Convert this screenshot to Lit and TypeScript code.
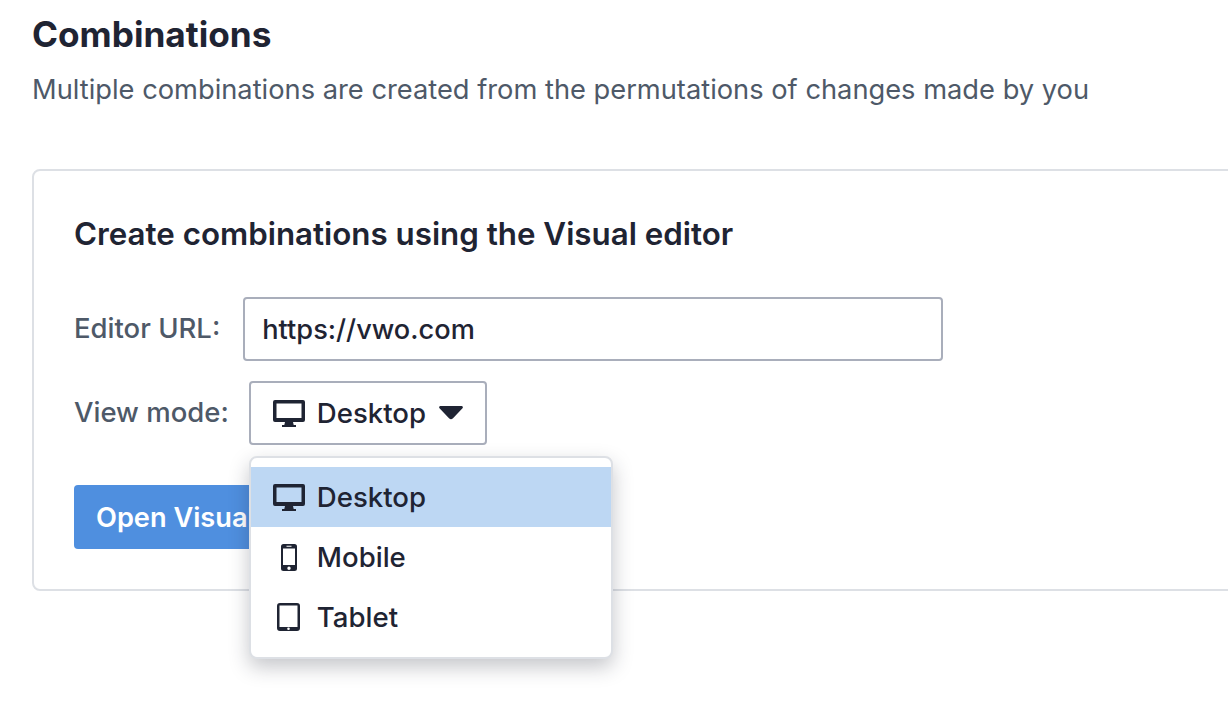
import { LitElement, html, css, svg } from "lit";
import { customElement } from "lit/decorators.js";

const desktop = svg`<path fill-rule="evenodd" d="M2 1h28a2 2 0 0 1 2 2v18a2 2 0 0 1-2 2H20l.7 3H23v2H9v-2h2.3l.7-3H2a2 2 0 0 1-2-2V3a2 2 0 0 1 2-2Zm1.500 3.500v14.500h25V4.500Z"/>`;
const mobile = svg`<path fill-rule="evenodd" d="M2.5 0h11A2.5 2.5 0 0 1 16 2.500v22a2.500 2.500 0 0 1-2.500 2.500h-11A2.500 2.500 0 0 1 0 24.500v-22A2.500 2.500 0 0 1 2.500 0ZM2 4.500v16.500h12V4.500ZM5.500 1.800v1h5v-1ZM8 22.500a1.700 1.700 0 1 0 0 3.400 1.700 1.700 0 0 0 0-3.400Z"/>`;
const tablet = svg`<path fill-rule="evenodd" d="M3 0h17a3 3 0 0 1 3 3v22a3 3 0 0 1-3 3H3a3 3 0 0 1-3-3V3a3 3 0 0 1 3-3Zm-.500 2.500v21.500h18V2.500ZM11.500 24.400a1.300 1.300 0 1 0 0 2.600 1.300 1.300 0 0 0 0-2.600Z"/>`;

@customElement("app-root")
export class AppRoot extends LitElement {
  static styles = css`
    :host {
      display: block;
      width: 1228px;
      height: 720px;
      overflow: hidden;
      background: #fff;
      font-family: Inter, "Noto Sans", sans-serif;
      color: #1f2433;
      box-sizing: border-box;
      padding: 12px 0 0 32px;
    }
    * { box-sizing: border-box; }
    h1 {
      margin: 0;
      font-size: 35.2px;
      line-height: 44px;
      font-weight: 700;
    }
    .sub {
      margin: 16px 0 0;
      font-size: 27.27px;
      line-height: 36px;
      color: #4e5968;
      white-space: nowrap;
    }
    .card {
      margin-top: 61px;
      width: 1300px;
      height: 422px;
      border: 2px solid #dde0e5;
      border-radius: 8px;
      padding: 43px 40px 0;
    }
    h2 {
      margin: 0;
      font-size: 31.3px;
      line-height: 40px;
      font-weight: 600;
    }
    .row { display: flex; align-items: center; }
    .url-row { margin-top: 43px; gap: 23px; }
    .label {
      font-size: 27.5px;
      line-height: 34px;
      font-weight: 500;
      color: #4e5968;
      padding-bottom: 2px;
    }
    .input {
      width: 700px;
      height: 64px;
      border: 2px solid #a9aebb;
      border-radius: 4px;
      padding: 0 17px;
      display: flex;
      align-items: center;
      font-size: 27.2px;
      font-weight: 500;
    }
    .mode-row { margin-top: 20px; gap: 20px; }
    .select {
      width: 238px;
      height: 64px;
      border: 2px solid #a9aebb;
      border-radius: 4px;
      padding-left: 22px;
      display: flex;
      align-items: center;
      font-size: 27.6px;
      font-weight: 500;
      position: relative;
    }
    .ico { width: 32px; display: flex; justify-content: center; flex: none; margin-right: 12px; }
    .ico svg { display: block; fill: #1f2433; }
    .caret { margin-left: 13px; display: block; fill: #1f2433; }
    .menu {
      position: absolute;
      left: -2px;
      top: 73px;
      width: 364px;
      height: 203px;
      background: #fff;
      border: 2px solid #dde0e5;
      border-radius: 8px;
      box-shadow: 0 8px 20px rgba(31, 36, 51, 0.26);
      padding: 9px 0;
      z-index: 2;
    }
    .opt {
      height: 60px;
      display: flex;
      align-items: center;
      padding-left: 22px;
    }
    .opt.active { background: #bdd7f3; }
    .btn {
      margin-top: 40px;
      width: 360px;
      height: 64px;
      background: #4f8fdf;
      color: #fff;
      border-radius: 4px;
      padding-left: 22px;
      display: flex;
      align-items: center;
      font-size: 27.2px;
      font-weight: 600;
      white-space: nowrap;
    }
  `;

  private icon(kind: string) {
    if (kind === "Desktop")
      return html`<span class="ico"><svg width="32" height="28" viewBox="0 0 32 28">${desktop}</svg></span>`;
    if (kind === "Mobile")
      return html`<span class="ico"><svg width="16" height="27" viewBox="0 0 16 27">${mobile}</svg></span>`;
    return html`<span class="ico"><svg width="23" height="28" viewBox="0 0 23 28">${tablet}</svg></span>`;
  }

  render() {
    return html`
      <h1>Combinations</h1>
      <p class="sub">Multiple combinations are created from the permutations of changes made by you</p>
      <section class="card">
        <h2>Create combinations using the Visual editor</h2>
        <div class="row url-row">
          <span class="label">Editor URL:</span>
          <div class="input">https://vwo.com</div>
        </div>
        <div class="row mode-row">
          <span class="label">View mode:</span>
          <div class="select">
            ${this.icon("Desktop")}
            <span>Desktop</span>
            <svg class="caret" width="24" height="14" viewBox="0 0 24 14"><path d="M1.500 0h21a1.300 1.300 0 0 1 1 2.200l-9.500 10a2.800 2.800 0 0 1-4 0L.5 2.200A1.300 1.300 0 0 1 1.500 0Z"/></svg>
            <div class="menu">
              ${["Desktop", "Mobile", "Tablet"].map(
                (o, i) => html`<div class="opt ${i === 0 ? "active" : ""}">${this.icon(o)}<span>${o}</span></div>`
              )}
            </div>
          </div>
        </div>
        <div class="btn">Open Visual Editor</div>
      </section>
    `;
  }
}
